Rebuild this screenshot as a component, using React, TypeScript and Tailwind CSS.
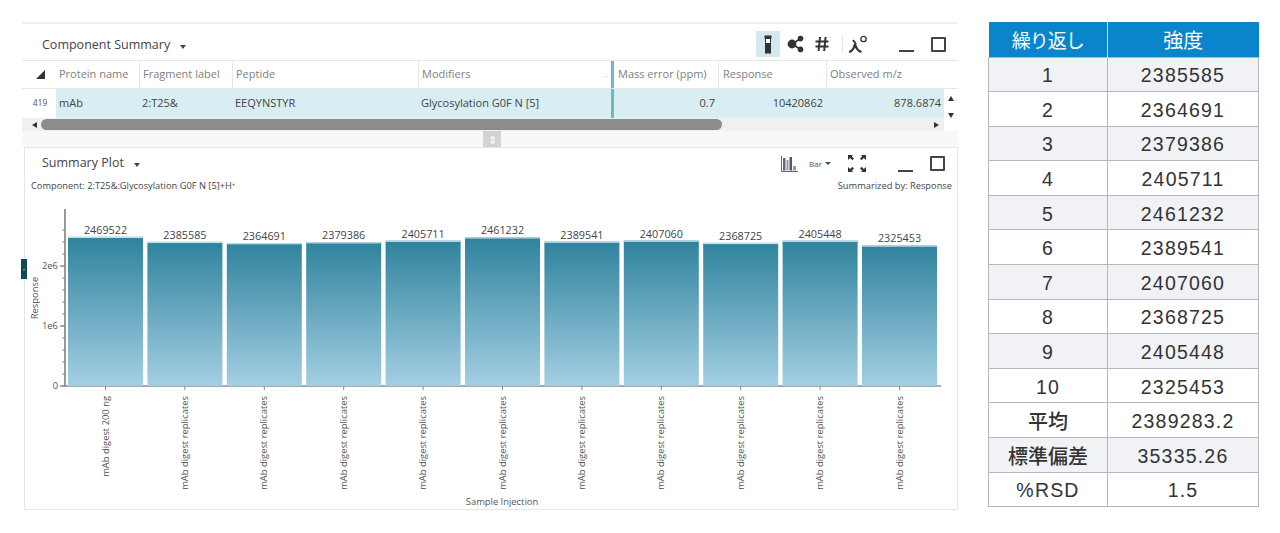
const uiFont = "font-['Open_Sans','Noto_Sans',sans-serif]";

const columns = [
  { label: "Protein name", value: "mAb", width: "w-[83px]", right: false },
  { label: "Fragment label", value: "2:T25&", width: "w-[93px]", right: false },
  { label: "Peptide", value: "EEQYNSTYR", width: "w-[186px]", right: false },
  { label: "Modifiers", value: "Glycosylation G0F N [5]", width: "w-[193px]", right: false },
  { label: "Mass error (ppm)", value: "0.7", width: "w-[107px]", right: true },
  { label: "Response", value: "10420862", width: "w-[108px]", right: true },
  { label: "Observed m/z", value: "878.6874", width: "w-[118px]", right: true },
];

const bars = [
  { value: 2469522, label: "mAb digest 200 ng" },
  { value: 2385585, label: "mAb digest replicates" },
  { value: 2364691, label: "mAb digest replicates" },
  { value: 2379386, label: "mAb digest replicates" },
  { value: 2405711, label: "mAb digest replicates" },
  { value: 2461232, label: "mAb digest replicates" },
  { value: 2389541, label: "mAb digest replicates" },
  { value: 2407060, label: "mAb digest replicates" },
  { value: 2368725, label: "mAb digest replicates" },
  { value: 2405448, label: "mAb digest replicates" },
  { value: 2325453, label: "mAb digest replicates" },
];

const rows = [
  { name: "1", value: "2385585", shaded: true },
  { name: "2", value: "2364691", shaded: false },
  { name: "3", value: "2379386", shaded: true },
  { name: "4", value: "2405711", shaded: false },
  { name: "5", value: "2461232", shaded: true },
  { name: "6", value: "2389541", shaded: false },
  { name: "7", value: "2407060", shaded: true },
  { name: "8", value: "2368725", shaded: false },
  { name: "9", value: "2405448", shaded: true },
  { name: "10", value: "2325453", shaded: false },
  { name: "平均", value: "2389283.2", shaded: false, cjk: true },
  { name: "標準偏差", value: "35335.26", shaded: true, cjk: true },
  { name: "%RSD", value: "1.5", shaded: false },
];

function Caret() {
  return <span className="ml-[10px] mt-[3px] h-0 w-0 border-x-[3.5px] border-t-[4px] border-x-transparent border-t-[#444]" />;
}

function WindowButtons() {
  return (
    <div className="flex items-center">
      <span className="mt-[14px] h-[2px] w-[15px] bg-[#444]" />
      <span className="ml-[17px] h-[15px] w-[15px] rounded-[1px] border-2 border-[#444]" />
    </div>
  );
}

function VialIcon() {
  return (
    <svg width="8" height="19" viewBox="0 0 8 19">
      <rect x="0.5" y="0.5" width="7" height="3" fill="#333" />
      <rect x="1.5" y="3.5" width="5" height="14.5" fill="#fff" stroke="#333" strokeWidth="1" />
      <rect x="1.5" y="8" width="5" height="10" fill="#333" />
    </svg>
  );
}

function NodesIcon() {
  return (
    <svg width="17" height="18" viewBox="0 0 17 18">
      <path d="M5 9 L13 4 M5 9 L13 14" stroke="#333" strokeWidth="1.5" />
      <circle cx="5" cy="9" r="4.4" fill="#333" />
      <circle cx="13.5" cy="3.6" r="2.8" fill="#333" />
      <circle cx="13.5" cy="14.4" r="2.8" fill="#333" />
    </svg>
  );
}

function HashIcon() {
  return (
    <svg width="14" height="16" viewBox="0 0 14 16">
      <path d="M5 1 L3.6 15 M10.6 1 L9.2 15 M0.5 5.5 H13.5 M0.5 10.5 H13.5" stroke="#333" strokeWidth="2" fill="none" />
    </svg>
  );
}

function PeakIcon() {
  return (
    <svg width="20" height="19" viewBox="0 0 20 19">
      <path d="M1 17 C4 16.5 6 13 7 9 C8 13 10 16 13.5 17" stroke="#333" strokeWidth="2.2" fill="none" />
      <path d="M5 5 L8 9" stroke="#333" strokeWidth="2" />
      <circle cx="15.5" cy="4" r="2.7" stroke="#333" strokeWidth="1.3" fill="none" />
    </svg>
  );
}

function BarChartIcon() {
  return (
    <svg width="17" height="17" viewBox="0 0 17 17">
      <path d="M0.5 1 V16.5 H17" stroke="#666" strokeWidth="1" fill="none" />
      <rect x="2" y="3" width="2.5" height="12.5" fill="#667" />
      <rect x="5.5" y="5" width="2" height="10.5" fill="#99a" />
      <rect x="8.5" y="2" width="2.5" height="13.5" fill="#556" />
      <rect x="12" y="11" width="3" height="4.5" fill="#99a" />
    </svg>
  );
}

function ExpandIcon() {
  return (
    <svg width="20" height="19" viewBox="0 0 20 19">
      <path d="M1 1 H6 L4.8 2.4 L7 4.6 L5.4 6.2 L3.2 4 L1 6 Z" fill="#333" />
      <path d="M19 1 H14 L15.2 2.4 L13 4.6 L14.6 6.2 L16.8 4 L19 6 Z" fill="#333" />
      <path d="M1 18 H6 L4.8 16.6 L7 14.4 L5.4 12.8 L3.2 15 L1 13 Z" fill="#333" />
      <path d="M19 18 H14 L15.2 16.6 L13 14.4 L14.6 12.8 L16.8 15 L19 13 Z" fill="#333" />
    </svg>
  );
}

function Chart() {
  const baseY = 194;
  const perUnit = 60 / 1e6;
  return (
    <svg width="932" height="318" viewBox="0 0 932 318" className="block">
      <defs>
        <linearGradient id="barFill" x1="0" y1="0" x2="0" y2="1">
          <stop offset="0" stopColor="#2f839d" />
          <stop offset="1" stopColor="#a4cfe3" />
        </linearGradient>
      </defs>
      <path d={`M40 17 V${baseY} H916`} stroke="#555" strokeWidth="1.2" fill="none" />
      {[0, 1, 2].map((t) => (
        <line key={t} x1="35" x2="40" y1={baseY - t * 60} y2={baseY - t * 60} stroke="#666" />
      ))}
      {Array.from({ length: 14 }, (_, i) => (
        <line key={i} x1="37" x2="40" y1={baseY - i * 12} y2={baseY - i * 12} stroke="#888" />
      ))}
      <g fontFamily="Open Sans, sans-serif" fontSize="9.4" fill="#555">
        <text x="33" y={baseY + 3} textAnchor="end">0</text>
        <text x="33" y={baseY - 57} textAnchor="end">1e6</text>
        <text x="33" y={baseY - 117} textAnchor="end">2e6</text>
        <text transform={`translate(13 ${baseY - 88}) rotate(-90)`} textAnchor="middle">Response</text>
        <text x="477" y="313" textAnchor="middle">Sample Injection</text>
      </g>
      {bars.map((b, i) => {
        const x = 43 + i * 79.4;
        const h = b.value * perUnit;
        return (
          <g key={i}>
            <rect x={x} y={baseY - h - 1} width="75" height={h + 1} fill="url(#barFill)" />
            <rect x={x} y={baseY - h - 1} width="75" height="1.2" fill="#bfe3ee" />
            <text x={x + 37.5} y={baseY - h - 4} textAnchor="middle" fontFamily="Open Sans, sans-serif" fontSize="10.8" fill="#444">
              {b.value}
            </text>
            <line x1={x + 37.5} x2={x + 37.5} y1={baseY} y2={baseY + 4} stroke="#888" />
            <text
              transform={`translate(${x + 40.5} ${baseY + 10}) rotate(-90)`}
              textAnchor="end"
              fontFamily="Open Sans, sans-serif"
              fontSize="9.4"
              fill="#555"
            >
              {b.label}
            </text>
          </g>
        );
      })}
    </svg>
  );
}

function ResultTable() {
  return (
    <table className="w-[271px] table-fixed border-collapse font-['Liberation_Sans','Noto_Sans_CJK_JP',sans-serif] text-[19.5px] tracking-[1.2px] text-[#333]">
      <thead>
        <tr className="h-[35px] bg-[#0a85cc] text-white">
          <th className="w-[119px] border-r border-[#cde4f3] pt-[2px] font-['Noto_Sans_CJK_JP',sans-serif] text-[19px] font-normal tracking-[-1px]">繰り返し</th>
          <th className="pt-[2px] font-['Noto_Sans_CJK_JP',sans-serif] text-[20px] font-normal tracking-normal">強度</th>
        </tr>
      </thead>
      <tbody>
        {rows.map((r) => (
          <tr key={r.name} className={r.shaded ? "h-[34.6px] bg-[#f1f2f6]" : "h-[34.6px] bg-white"}>
            <td
              className={
                r.cjk
                  ? "border border-[#b4b7bb] p-0 pt-[2px] text-center font-['Noto_Sans_CJK_JP',sans-serif] text-[20px] font-medium tracking-normal"
                  : "border border-[#b4b7bb] p-0 pt-[3px] text-center"
              }
            >
              {r.name}
            </td>
            <td className="border border-[#b4b7bb] p-0 pt-[3px] text-center">{r.value}</td>
          </tr>
        ))}
      </tbody>
    </table>
  );
}

export default function App() {
  return (
    <div className={`relative flex h-[533px] w-[1280px] items-start overflow-hidden bg-white pl-[22px] pt-[22px] ${uiFont}`}>
      <div className="flex w-[936px] flex-col">
        {/* Component Summary */}
        <section className="border-t-2 border-[#eef0f0]">
          <div className="flex h-[36px] items-center pl-[20px] pr-[12px]">
            <h2 className="mt-[7px] text-[12.5px] font-normal text-[#444]">Component Summary</h2>
            <div className="mt-[7px] flex items-center"><Caret /></div>
            <div className="ml-auto mt-[4px] flex items-center">
              <span className="flex h-[26px] w-[24px] items-center justify-center bg-[#d5e8ee]">
                <VialIcon />
              </span>
              <span className="ml-[7px] flex w-[17px] justify-center"><NodesIcon /></span>
              <span className="ml-[11px] flex w-[14px] justify-center"><HashIcon /></span>
              <span className="ml-[13px] h-[20px] border-l border-[#e6e6e6]" />
              <span className="ml-[5px] flex w-[20px] justify-center"><PeakIcon /></span>
              <span className="ml-[31px]"><WindowButtons /></span>
            </div>
          </div>
          <div className="flex h-[29px] border-y border-[#e6e8e8] text-[11px] text-[#808080]">
            <div className="flex w-[34px] items-center justify-center pl-[2px]">
              <span className="h-0 w-0 border-b-[9px] border-l-[9px] border-b-[#333] border-l-transparent" />
            </div>
            {columns.map((c, i) => (
              <div
                key={c.label}
                className={`flex items-center border-[#e6e8e8] pl-[3px] ${c.width} ${i === 0 ? "" : "border-l"} ${i === 4 ? "border-l-[3px] border-l-[#6fb8c8] pl-[4px]" : ""} ${i === 3 ? "pr-1" : ""} ${i === 5 ? "pl-[4px]" : ""}`}
              >
                {c.label}
                {i === 3 && <span className="ml-auto text-[8px] leading-none text-[#aaa]">-</span>}
              </div>
            ))}
          </div>
          <div className="flex h-[29px] text-[11px] text-[#444]">
            <div className="flex w-[34px] items-center justify-center pl-[2px] text-[8.5px] text-[#555]">419</div>
            <div className="flex w-[888px] bg-[#d8eef3]">
              {columns.map((c, i) => (
                <div
                  key={c.label}
                  className={`flex items-center ${c.width} ${i === 4 ? "border-l-[3px] border-[#6fb8c8]" : ""} ${c.right ? "justify-end pr-[3px]" : "pl-[3px]"}`}
                >
                  {c.value}
                </div>
              ))}
            </div>
            <div className="flex w-[14px] flex-col items-center justify-center gap-[12px] pt-[6px]">
              <span className="h-0 w-0 border-x-[3px] border-b-[5px] border-x-transparent border-b-[#333]" />
              <span className="h-0 w-0 border-x-[3px] border-t-[5px] border-x-transparent border-t-[#333]" />
            </div>
          </div>
          <div className="mr-[14px] flex h-[13px] items-center bg-[#f0f0f0] pl-[10px] pr-[5px]">
            <span className="h-0 w-0 border-y-[3px] border-r-[5px] border-y-transparent border-r-[#333]" />
            <span className="ml-[4px] h-[11px] w-[681px] rounded-full bg-[#8c8c8c]" />
            <span className="ml-auto h-0 w-0 border-y-[3px] border-l-[5px] border-y-transparent border-l-[#333]" />
          </div>
        </section>

        {/* Splitter */}
        <div className="flex h-[16px] justify-center bg-[#f7f8f8] pl-[4px]">
          <span className="flex h-[16px] w-[18px] items-center justify-center bg-[#d3d3d3] text-[11px] leading-none text-white">⇕</span>
        </div>

        {/* Summary Plot */}
        <section className="ml-[2px] h-[363px] border border-[#e2e7e7]">
          <div className="flex h-[31px] items-center pl-[17px] pr-[12px]">
            <h2 className="text-[12.5px] font-normal text-[#444]">Summary Plot</h2>
            <Caret />
            <div className="ml-auto flex items-center">
              <BarChartIcon />
              <span className="ml-[11px] text-[8px] text-[#555]">Bar</span>
              <span className="ml-[3px] h-0 w-0 border-x-[3px] border-t-[3px] border-x-transparent border-t-[#444]" />
              <span className="ml-[16px]"><ExpandIcon /></span>
              <span className="ml-[31px]"><WindowButtons /></span>
            </div>
          </div>
          <div className="flex h-[13px] items-center justify-between pl-[6px] pr-[5px] text-[9.3px] text-[#444]">
            <span>Component: 2:T25&amp;:Glycosylation G0F N [5]+H⁺</span>
            <span>Summarized by: Response</span>
          </div>
          <Chart />
        </section>
      </div>

      {/* Collapsed side tab */}
      <span className="absolute left-[21px] top-[259px] flex h-[20px] w-[6px] items-center justify-center bg-[#0f4a55] text-[6px] leading-none text-white">›</span>

      <div className="ml-[30px]">
        <ResultTable />
      </div>
    </div>
  );
}
